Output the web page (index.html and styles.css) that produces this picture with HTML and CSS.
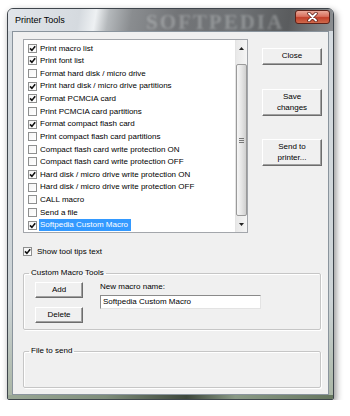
FILE: index.html
```html
<!DOCTYPE html>
<html>
<head>
	<title>Printer Tools</title>
	<link rel="stylesheet" href="styles.css">
</head>
<body>
<div class="window">
  <div class="titlebar">
    <span class="title">Printer Tools</span>
    <span class="watermark">SOFTPEDIA</span>
    <div class="close-x">
      <svg width="11" height="10" viewBox="0 0 11 10">
        <path d="M2 1.5 L9 8.5 M9 1.5 L2 8.5" stroke="#5b1d14" stroke-width="3.4" stroke-linecap="round"/>
        <path d="M2 1.5 L9 8.5 M9 1.5 L2 8.5" stroke="#fff" stroke-width="1.9" stroke-linecap="round"/>
      </svg>
    </div>
  </div>
  <div class="client">
    <div class="top">
      <div class="listbox">
        <ul class="items">
          <li><span class="box"><svg viewBox="0 0 7 7"><path d="M1 3.4 L2.9 5.4 L6.2 1.2"/></svg></span><span class="label">Print macro list</span></li>
          <li><span class="box"><svg viewBox="0 0 7 7"><path d="M1 3.4 L2.9 5.4 L6.2 1.2"/></svg></span><span class="label">Print font list</span></li>
          <li><span class="box"></span><span class="label">Format hard disk / micro drive</span></li>
          <li><span class="box"><svg viewBox="0 0 7 7"><path d="M1 3.4 L2.9 5.4 L6.2 1.2"/></svg></span><span class="label">Print hard disk / micro drive partitions</span></li>
          <li><span class="box"><svg viewBox="0 0 7 7"><path d="M1 3.4 L2.9 5.4 L6.2 1.2"/></svg></span><span class="label">Format PCMCIA card</span></li>
          <li><span class="box"></span><span class="label">Print PCMCIA card partitions</span></li>
          <li><span class="box"><svg viewBox="0 0 7 7"><path d="M1 3.4 L2.9 5.4 L6.2 1.2"/></svg></span><span class="label">Format compact flash card</span></li>
          <li><span class="box"></span><span class="label">Print compact flash card partitions</span></li>
          <li><span class="box"></span><span class="label">Compact flash card write protection ON</span></li>
          <li><span class="box"></span><span class="label">Compact flash card write protection OFF</span></li>
          <li><span class="box"><svg viewBox="0 0 7 7"><path d="M1 3.4 L2.9 5.4 L6.2 1.2"/></svg></span><span class="label">Hard disk / micro drive write protection ON</span></li>
          <li><span class="box"></span><span class="label">Hard disk / micro drive write protection OFF</span></li>
          <li><span class="box"></span><span class="label">CALL macro</span></li>
          <li><span class="box"></span><span class="label">Send a file</span></li>
          <li class="selected"><span class="box"><svg viewBox="0 0 7 7"><path d="M1 3.4 L2.9 5.4 L6.2 1.2"/></svg></span><span class="label">Softpedia Custom Macro</span></li>
        </ul>
        <div class="scrollbar">
          <div class="arrow"><svg width="5" height="3" viewBox="0 0 5 3"><path d="M0 3 L2.5 0 L5 3 Z" fill="#222"/></svg></div>
          <div class="track">
            <div class="thumb"><span class="grip"></span></div>
          </div>
          <div class="arrow"><svg width="5" height="3" viewBox="0 0 5 3"><path d="M0 0 L5 0 L2.5 3 Z" fill="#222"/></svg></div>
        </div>
      </div>
      <div class="buttons">
        <div class="btn close">Close</div>
        <div class="btn tall save">Save<br>changes</div>
        <div class="btn tall send">Send to<br>printer...</div>
      </div>
    </div>

    <div class="tooltips">
      <span class="box"><svg viewBox="0 0 7 7"><path d="M1 3.4 L2.9 5.4 L6.2 1.2"/></svg></span>
      <span>Show tool tips text</span>
    </div>

    <fieldset class="group macro">
      <legend>Custom Macro Tools</legend>
      <div class="macro-body">
        <div class="macro-buttons">
          <div class="btn small">Add</div>
          <div class="btn small">Delete</div>
        </div>
        <div class="macro-name">
          <div class="name-label">New macro name:</div>
          <div class="input">Softpedia Custom Macro</div>
        </div>
      </div>
    </fieldset>

    <fieldset class="group file">
      <legend>File to send</legend>
      <div class="file-body"></div>
    </fieldset>
  </div>
  <div class="bottom-frame"></div>
</div>
</body>
</html>
```

FILE: styles.css
```css
html {
  box-sizing: border-box;
}
*,
*:before,
*:after {
  box-sizing: inherit;
}

body {
  margin: 0;
  background-color: #fff;
  font-family: "Liberation Sans", Arial, sans-serif;
  color: #000;
}

/* window frame */
.window {
  margin: 8px 0 0 7px;
  width: 327px;
  height: 392px;
  border: 1px solid #3e454c;
  border-radius: 6px 6px 2px 2px;
  background: linear-gradient(to bottom, #d6dce1 0%, #ccd3d6 75%, #a9b5a4 100%);
  box-shadow: 2px 3px 7px rgba(0, 0, 0, 0.45);
  display: flex;
  flex-direction: column;
  overflow: hidden;
}
.titlebar {
  position: relative;
  height: 22px;
  display: flex;
  align-items: flex-start;
  padding-left: 7px;
  background: linear-gradient(100deg, #e1e5ea 0%, #d5dadf 22%, #eef1f3 27%, #b4b8bb 31%, #8a8d90 38%, #727477 52%, #6f7275 70%, #5a5c5e 86%, #8d9093 100%);
}
.title {
  position: relative;
  z-index: 1;
  font-size: 9px;
  line-height: 22px;
}
.watermark {
  position: absolute;
  left: 138px;
  top: 1px;
  font-family: "Liberation Serif", serif;
  font-weight: bold;
  font-size: 21px;
  letter-spacing: 2px;
  color: rgba(225, 228, 230, 0.3);
  filter: blur(0.9px);
}
.close-x {
  position: relative;
  margin: 1px 3px 0 auto;
  width: 35px;
  height: 14px;
  border: 1px solid #5e2219;
  border-radius: 3px;
  background: linear-gradient(to bottom, #e9a898 0%, #d9715e 45%, #c2402a 55%, #d06a4c 100%);
  display: flex;
  align-items: center;
  justify-content: center;
}

/* client area */
.client {
  margin: 0 4px;
  height: 364px;
  border: 1px solid #8a949d;
  background-color: #f0f0f0;
  padding: 7px 0 0 10px;
  font-size: 8px;
}
.top {
  display: flex;
  align-items: flex-start;
  gap: 14px;
}

/* list with checkboxes */
.listbox {
  width: 225px;
  height: 194px;
  border: 1px solid #a3a6ab;
  background-color: #fff;
  display: flex;
}
.items {
  flex: 1;
  margin: 0;
  padding: 2px 0 0 4px;
  list-style: none;
}
.items li {
  height: 12.64px;
  display: flex;
  align-items: center;
  gap: 2px;
  white-space: nowrap;
}
.label {
  padding: 0 3px 0 1px;
  line-height: 11.5px;
}
.selected .label {
  background-color: #3399ff;
  color: #fff;
}
.box {
  width: 9px;
  height: 9px;
  border: 1px solid #8e8f8f;
  background: linear-gradient(135deg, #f4f4f4, #fff);
  display: inline-flex;
  flex-shrink: 0;
}
.box svg {
  width: 7px;
  height: 7px;
}
.box path {
  fill: none;
  stroke: #111;
  stroke-width: 1.6;
}

/* scrollbar */
.scrollbar {
  width: 12px;
  display: flex;
  flex-direction: column;
  background: linear-gradient(to right, #e8e8e8, #f5f5f5);
  border-left: 1px solid #e4e4e4;
}
.arrow {
  height: 16px;
  display: flex;
  align-items: center;
  justify-content: center;
}
.track {
  flex: 1;
  padding-top: 8px;
}
.thumb {
  height: 152px;
  border: 1px solid #9a9a9a;
  border-radius: 2px;
  background: linear-gradient(to right, #f6f6f6 0%, #e6e6e6 50%, #d0d0d0 100%);
  display: flex;
  align-items: center;
  justify-content: center;
}
.grip {
  width: 5px;
  height: 5px;
  border-top: 1px solid #777;
  border-bottom: 1px solid #777;
  background: linear-gradient(#777, #777) center / 5px 1px no-repeat;
}

/* push buttons */
.btn {
  border-style: solid;
  border-width: 1px;
  border-color: #fff #6d6d6d #6d6d6d #fff;
  box-shadow: inset -1px -1px 0 #a0a0a0;
  background-color: #f0f0f0;
  text-align: center;
  font-size: 8px;
  line-height: 10.5px;
  display: flex;
  align-items: center;
  justify-content: center;
}
.buttons {
  width: 60px;
  padding-top: 9px;
  display: flex;
  flex-direction: column;
}
.btn.close {
  height: 17px;
}
.btn.tall {
  height: 27px;
}
.btn.save {
  margin-top: 24px;
}
.btn.send {
  margin-top: 23px;
}

.tooltips {
  margin-top: 14px;
  height: 9px;
  display: flex;
  align-items: center;
  gap: 5px;
}

/* group boxes */
.group {
  margin: 12px 0 0;
  width: 298px;
  padding: 0;
  border: 1px solid #c6c6c6;
  border-radius: 2px;
  box-shadow: inset 1px 1px 0 #fff, 1px 1px 0 #fff;
}
.group legend {
  margin-left: 5px;
  padding: 0 2px;
  font-size: 8px;
  line-height: 10px;
}
.macro-body {
  display: flex;
  gap: 17px;
  padding: 4px 0 6px 11px;
}
.macro-buttons {
  display: flex;
  flex-direction: column;
  gap: 9px;
}
.btn.small {
  width: 48px;
  height: 16px;
}
.name-label {
  line-height: 10px;
  margin-bottom: 3px;
}
.input {
  width: 161px;
  height: 14px;
  border-style: solid;
  border-width: 1px;
  border-color: #8a8a8a #e3e3e3 #e3e3e3 #8a8a8a;
  background-color: #fff;
  padding-left: 2px;
  line-height: 12px;
}
.file {
  margin-top: 16px;
}
.file-body {
  height: 31px;
}

.bottom-frame {
  flex: 1;
  background: linear-gradient(to right, #9aa896 0%, #7e8d7a 30%, #3d473a 55%, #8a9a86 70%, #66765f 100%);
}
```
